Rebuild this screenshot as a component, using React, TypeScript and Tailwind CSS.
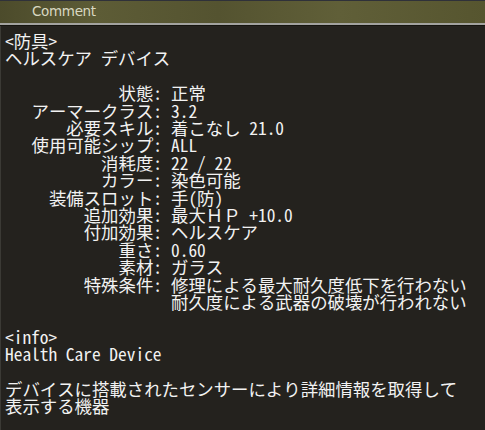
const rows: [string, string[]][] = [
  ["状態", ["正常"]],
  ["アーマークラス", ["3.2"]],
  ["必要スキル", ["着こなし 21.0"]],
  ["使用可能シップ", ["ALL"]],
  ["消耗度", ["22 / 22"]],
  ["カラー", ["染色可能"]],
  ["装備スロット", ["手(防)"]],
  ["追加効果", ["最大ＨＰ +10.0"]],
  ["付加効果", ["ヘルスケア"]],
  ["重さ", ["0.60"]],
  ["素材", ["ガラス"]],
  ["特殊条件", ["修理による最大耐久度低下を行わない", "耐久度による武器の破壊が行われない"]],
];

const mono = "font-['Noto_Sans_Mono_CJK_JP','Noto_Sans_CJK_JP','DejaVu_Sans_Mono',monospace]";

export default function App() {
  return (
    <div className="w-[485px] h-[430px] overflow-hidden bg-[#24221e] flex flex-col">
      {/* title bar */}
      <div className="h-[23px] shrink-0 border-t border-[#2f3139] bg-[linear-gradient(90deg,#4c4b2b_0%,#5d5c36_20%,#545330_45%,#605f38_70%,#56552f_100%)] flex items-center pl-8">
        <span className="font-['DejaVu_Sans',sans-serif] text-[13.5px] leading-none text-[#d9d8c2] tracking-tight">Comment</span>
      </div>
      <div className="h-[2px] shrink-0 bg-[#a3a3a0]" />
      <div className="h-px shrink-0 bg-[#15140f]" />

      <div className={`flex-1 border-l border-[#3b3a35] pl-1 pt-[6px] text-[17.4px] leading-[17.4px] text-[#f2f2f2] ${mono}`}>
        <div>&lt;防具&gt;</div>
        <div>ヘルスケア デバイス</div>
        <div className="h-[17.4px]" />

        <div className="grid grid-cols-[157px_1fr] gap-x-[9px]">
          {rows.map(([label, values]) => (
            <div key={label} className="contents">
              <div className="text-right whitespace-nowrap">{label}:</div>
              <div className="flex flex-col whitespace-nowrap">
                {values.map((v) => (
                  <span key={v}>{v}</span>
                ))}
              </div>
            </div>
          ))}
        </div>

        <div className="h-[17.4px]" />
        <div>&lt;info&gt;</div>
        <div>Health Care Device</div>
        <div className="h-[17.4px]" />
        <div>デバイスに搭載されたセンサーにより詳細情報を取得して</div>
        <div>表示する機器</div>
      </div>
    </div>
  );
}
